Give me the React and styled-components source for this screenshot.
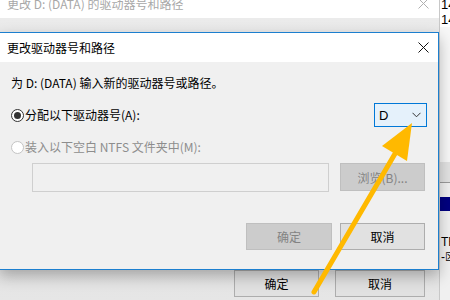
import React from "react";
import styled, { createGlobalStyle } from "styled-components";

const Global = createGlobalStyle`
  html, body { margin: 0; padding: 0; }
  body {
    font-family: "Noto Sans CJK SC", "Noto Sans", "Liberation Sans", sans-serif;
    font-size: 12px;
    color: #000;
  }
`;

const Desktop = styled.div`
  position: relative;
  width: 450px;
  height: 300px;
  overflow: hidden;
  background: #f0f0f0;
`;

/* window far right, mostly off screen */
const SideWindow = styled.div`
  position: absolute;
  left: 439px;
  top: 0;
  width: 40px;
  height: 300px;
  border-left: 1px solid #c8c8c8;
  background: #f0f0f0;
  display: flex;
  flex-direction: column;
`;

const SideTop = styled.div`
  background: #fff;
  height: 30px;
  padding-left: 1px;
  display: flex;
  flex-direction: column;
  font-family: "Liberation Sans", sans-serif;
  font-size: 13px;
  line-height: 15px;
  margin-top: -3px;
`;

const SideLight = styled.div`
  height: 135px;
  background: #f7f7f7;
`;

const SideRule = styled.div`
  height: ${p => p.h}px;
  background: ${p => p.c};
`;

const SideText = styled.div`
  font-family: "Liberation Sans", sans-serif;
  font-size: 12px;
  line-height: 15px;
  padding-left: 1px;
`;

/* inactive parent window */
const BackWindow = styled.div`
  position: absolute;
  left: 0;
  top: -12px;
  width: 439px;
  height: 312px;
  background: #f0f0f0;
  display: flex;
  flex-direction: column;
`;

const BackTitle = styled.div`
  height: 30px;
  flex: none;
  background: #fff;
  display: flex;
  align-items: center;
  justify-content: space-between;
  padding: 0 10px 0 7px;
  color: #a8a8a8;
  font-size: 12px;
`;

const BackBody = styled.div`
  flex: 1;
  background: linear-gradient(#ebebeb, #dedede 60%, #e6e6e6);
  display: flex;
  flex-direction: column;
  justify-content: flex-end;
`;

const BackButtons = styled.div`
  display: flex;
  justify-content: flex-end;
  gap: 16px;
  padding: 0 14px 3px 0;
`;

const BackButton = styled.div`
  width: ${p => p.w}px;
  height: 27px;
  box-sizing: border-box;
  border: 1px solid #adadad;
  background: #e1e1e1;
  display: flex;
  align-items: center;
  justify-content: center;
`;

/* active child dialog */
const Dialog = styled.div`
  position: absolute;
  left: -1px;
  top: 32px;
  width: 440px;
  height: 238px;
  box-sizing: border-box;
  border: 1px solid #1c7fcf;
  background: #f0f0f0;
  box-shadow: 0 6px 14px rgba(0, 0, 0, 0.28);
  display: flex;
  flex-direction: column;
`;

const TitleBar = styled.div`
  height: 29px;
  flex: none;
  background: #fff;
  display: flex;
  align-items: center;
  justify-content: space-between;
  padding: 0 9px 0 7px;
`;

const Close = styled.svg`
  width: 11px;
  height: 11px;
  display: block;
`;

const Body = styled.div`
  flex: 1;
  display: flex;
  flex-direction: column;
  padding: 13px 13px 0 11px;
`;

const Line = styled.div`
  line-height: 16px;
  height: 16px;
  white-space: nowrap;
`;

const OptionRow = styled.div`
  display: flex;
  align-items: center;
  justify-content: space-between;
  height: ${p => p.h}px;
  margin-top: 12px;
`;

const Option = styled.label`
  display: flex;
  align-items: center;
  gap: 1px;
  color: ${p => (p.disabled ? "#8d8d8d" : "#000")};
  line-height: 16px;
  white-space: nowrap;
`;

const Radio = styled.span`
  width: 13px;
  height: 13px;
  border-radius: 50%;
  box-sizing: border-box;
  border: 1px solid ${p => (p.disabled ? "#c4c4c4" : "#333")};
  background: #fff;
  display: flex;
  align-items: center;
  justify-content: center;
  &::after {
    content: "";
    width: 7px;
    height: 7px;
    border-radius: 50%;
    background: ${p => (p.checked ? "#333" : "transparent")};
  }
`;

const Combo = styled.div`
  width: 53px;
  height: 24px;
  box-sizing: border-box;
  margin-right: -2px;
  border: 1px solid #0078d7;
  background: #e5f1fb;
  display: flex;
  align-items: center;
  justify-content: space-between;
  padding: 0 5px 0 4px;
  font-family: "Liberation Sans", sans-serif;
  font-size: 13px;
`;

const FolderRow = styled.div`
  display: flex;
  gap: 11px;
  margin-top: 8px;
  padding-left: 21px;
`;

const Field = styled.div`
  width: 297px;
  height: 29px;
  box-sizing: border-box;
  border: 1px solid #cfcfcf;
  background: #f0f0f0;
`;

const Button = styled.div`
  width: ${p => p.w || 85}px;
  height: ${p => p.h || 27}px;
  box-sizing: border-box;
  border: 1px solid ${p => (p.disabled ? "#bfbfbf" : "#adadad")};
  background: ${p => (p.disabled ? "#cccccc" : "#e1e1e1")};
  color: ${p => (p.disabled ? "#838383" : "#000")};
  display: flex;
  align-items: center;
  justify-content: center;
  white-space: nowrap;
`;

const Actions = styled.div`
  display: flex;
  justify-content: flex-end;
  gap: 8px;
  margin-top: 31px;
`;

const Arrow = styled.svg`
  position: absolute;
  left: 0;
  top: 0;
  width: 450px;
  height: 300px;
  pointer-events: none;
`;

const CloseIcon = ({ color }) => (
  <Close viewBox="0 0 11 11">
    <path d="M0.5 0.5 L10.5 10.5 M10.5 0.5 L0.5 10.5" stroke={color} strokeWidth="1" fill="none" />
  </Close>
);

export default function App() {
  return (
    <Desktop>
      <Global />
      <SideWindow>
        <SideTop>
          <span>14</span>
          <span>14</span>
        </SideTop>
        <SideLight />
        <SideRule h={20} c="#e2e2e2" />
        <SideRule h={1} c="#9a9a9a" />
        <SideRule h={14} c="#f0f0f0" />
        <SideRule h={14} c="#000080" />
        <SideRule h={24} c="#f0f0f0" />
        <SideText>TFS</SideText>
        <SideText>-☒</SideText>
      </SideWindow>

      <BackWindow>
        <BackTitle>
          <span>更改 D: (DATA) 的驱动器号和路径</span>
          <CloseIcon color="#b0b0b0" />
        </BackTitle>
        <BackBody>
          <BackButtons>
            <BackButton w={85}>确定</BackButton>
            <BackButton w={90}>取消</BackButton>
          </BackButtons>
        </BackBody>
      </BackWindow>

      <Dialog>
        <TitleBar>
          <span>更改驱动器号和路径</span>
          <CloseIcon color="#111" />
        </TitleBar>
        <Body>
          <Line>为 D: (DATA) 输入新的驱动器号或路径。</Line>
          <OptionRow h={24}>
            <Option>
              <Radio checked />
              分配以下驱动器号(A):
            </Option>
            <Combo>
              <span>D</span>
              <svg width="9" height="6" viewBox="0 0 9 6">
                <path d="M0.5 0.8 L4.5 4.8 L8.5 0.8" stroke="#333" strokeWidth="1" fill="none" />
              </svg>
            </Combo>
          </OptionRow>
          <OptionRow h={16}>
            <Option disabled>
              <Radio disabled />
              装入以下空白 NTFS 文件夹中(M):
            </Option>
          </OptionRow>
          <FolderRow>
            <Field />
            <Button disabled w={85} h={28}>浏览(B)...</Button>
          </FolderRow>
          <Actions>
            <Button disabled w={86}>确定</Button>
            <Button w={85}>取消</Button>
          </Actions>
        </Body>
      </Dialog>

      <Arrow viewBox="0 0 450 300">
        <line x1="314" y1="292" x2="396" y2="152" stroke="#ffb900" strokeWidth="5" strokeLinecap="round" />
        <polygon points="412,123 407,161 382,146" fill="#ffb900" />
      </Arrow>
    </Desktop>
  );
}
